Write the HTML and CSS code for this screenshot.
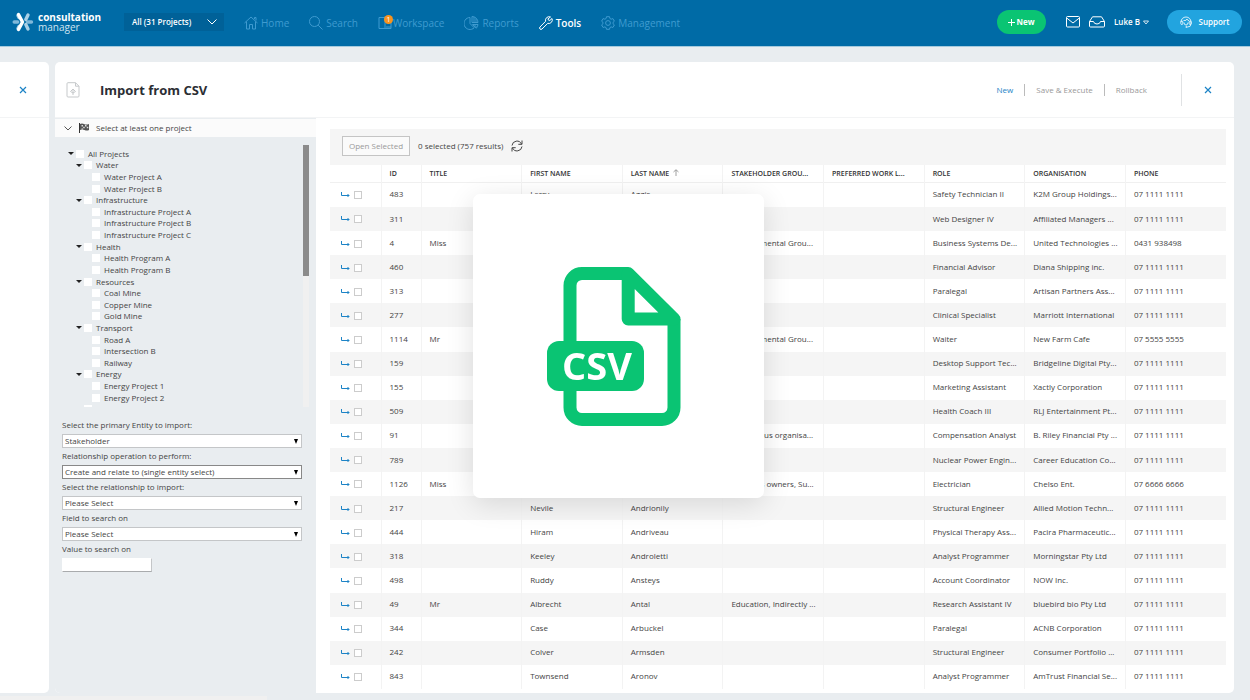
FILE: index.html
```html
<!DOCTYPE html>
<html lang="en">
<head>
<meta charset="utf-8">
<title>Import from CSV</title>
<link rel="stylesheet" href="styles.css">
</head>
<body>
<svg class="sprite" aria-hidden="true">
  <symbol id="go" viewBox="0 0 9 6"><path d="M.5 0v3.500H8M6.500 2l1.500 1.500L6.500 5" fill="none" stroke="currentColor"/></symbol>
  <symbol id="cross" viewBox="0 0 8 8"><path d="M1 1l6 6M7 1L1 7" fill="none" stroke="currentColor" stroke-width="1.2"/></symbol>
</svg>

<header class="topbar">
  <a class="logo" href="#">
    <svg width="22" height="20" viewBox="0 0 22 20" fill="none" stroke-linecap="round" stroke-width="3.4">
      <path d="M2.200 10h3.500M15.500 10h4" stroke="#7fb8da"/>
      <path d="M13.800 7.500l2.200-4.500M13.800 12.500l2.200 4.500M6 3.500l1 2M6 16.500l1-2" stroke="#a9d0e6"/>
      <path d="M6.500 2.500l4 7.500-4 7.500" stroke="#fff" stroke-linejoin="round"/>
    </svg>
    <span class="logo-text"><b>consultation</b><span>manager</span></span>
  </a>
  <button class="project-picker">All (31 Projects)
    <svg width="10" height="6" viewBox="0 0 10 6"><path d="M.5.5L5 5 9.500.5" fill="none" stroke="currentColor"/></svg>
  </button>
  <nav class="nav">
    <a href="#"><svg width="14" height="14" viewBox="0 0 14 14"><path d="M.5 7L7 1l6.500 6M2.500 5.500v7.500H5.500V8.500h3V13h3V5.500M10.500 3V1.500h1.500V4.500"/></svg>Home</a>
    <a href="#"><svg width="14" height="14" viewBox="0 0 14 14"><circle cx="5.500" cy="5.500" r="5"/><path d="M9.200 9.200l4.300 4.300"/></svg>Search</a>
    <a href="#" class="with-badge"><svg width="14" height="14" viewBox="0 0 14 14"><path d="M1 1.500h12v11H1zM7 1.500v11M8 11h5"/></svg><span class="badge">1</span>Workspace</a>
    <a href="#"><svg width="15" height="14" viewBox="0 0 15 14"><path d="M6 1.500a6 6 0 1 0 4.200 10.300L6 7.500zM8 .5v6h6A6 6 0 0 0 8 .5zM8.500 8.500h5.500a6 6 0 0 1-1.700 3.700zM10 1v5M12 2.500V6M10.500 9l2 2"/></svg>Reports</a>
    <a href="#" class="active"><svg width="14" height="14" viewBox="0 0 14 14"><path d="M11.500 1A3.600 3.600 0 0 0 6.600 5.300L1 11a1.400 1.400 0 0 0 2 2l5.700-5.600A3.600 3.600 0 0 0 13 2.500L10.800 4.500 9.300 4l-.3-1.200z"/></svg>Tools</a>
    <a href="#"><svg width="14" height="14" viewBox="0 0 14 14"><path d="M5.500.7h3l.4 1.800 1.200.7 1.800-.6 1.500 2.600-1.400 1.200v1.300l1.400 1.200-1.500 2.600-1.800-.6-1.200.7-.4 1.700h-3l-.4-1.700-1.200-.7-1.800.6L.6 8.900 2 7.700V6.400L.6 5.200l1.500-2.600 1.800.6 1.200-.7z"/><circle cx="7" cy="7" r="2.400"/></svg>Management</a>
  </nav>
  <div class="actions">
    <button class="pill new"><svg width="7" height="7" viewBox="0 0 7 7"><path d="M3.500 0v7M0 3.500h7" stroke="#fff"/></svg>New</button>
    <a class="icon" href="#" aria-label="Mail"><svg width="14" height="12" viewBox="0 0 14 12"><rect x=".5" y=".5" width="13" height="10.500" rx="1"/><path d="M.7 2L7 7l6.300-5"/></svg></a>
    <a class="icon" href="#" aria-label="Inbox"><svg width="16" height="12" viewBox="0 0 16 12"><path d="M.5 5.500L3.500.8h9l3 4.700V10a1 1 0 0 1-1 1h-13a1 1 0 0 1-1-1zM.5 5.500H4.500Q5 8 8 8t3.500-2.500h4"/></svg></a>
    <button class="user">Luke B <svg width="6" height="5" viewBox="0 0 6 5"><path d="M.5 1h5L3 4z" fill="none" stroke="currentColor" stroke-width=".8"/></svg></button>
    <button class="pill support"><svg width="12" height="12" viewBox="0 0 12 12" fill="none" stroke="#fff" stroke-width=".8"><path d="M1 6a5 5 0 0 1 10 0v2Q11 11 7.500 11M3.500 4.500Q6.500 5 7 3q.5 1.500 2 1.800"/><rect x=".8" y="5" width="2" height="3.500" rx="1"/><rect x="9.200" y="5" width="2" height="3.500" rx="1"/><path d="M4 6.500q0 2.500 2 2.500t2-2.500"/><circle cx="6.500" cy="11" r=".7"/></svg>Support</button>
  </div>
</header>

<main class="workspace">
  <aside class="rail">
    <div class="rail-head"><button class="close" aria-label="Close panel"><svg width="8" height="8"><use href="#cross"/></svg></button></div>
  </aside>

  <section class="panel">
    <div class="panel-head">
      <svg width="14" height="16" viewBox="0 0 14 16" fill="none" stroke="#c6c9cb"><path d="M2 .7h7.500l3.500 3.500V14a1 1 0 0 1-1 1H2a1 1 0 0 1-1-1V1.700a1 1 0 0 1 1-1zM9.500.7v3.500H13"/><path d="M7 13V7.500M4.500 9.500L7 7l2.500 2.500L7 11z"/></svg>
      <h1>Import from CSV</h1>
      <div class="commands">
        <button class="primary">New</button>
        <button>Save &amp; Execute</button>
        <button>Rollback</button>
      </div>
      <div class="close-box"><button class="close" aria-label="Close"><svg width="8" height="8"><use href="#cross"/></svg></button></div>
    </div>

    <div class="panel-body">
      <aside class="side">
        <div class="side-head">
          <svg width="8" height="5" viewBox="0 0 8 5"><path d="M.5.5L4 4 7.500.5" fill="none" stroke="#555"/></svg>
          <svg width="10" height="10" viewBox="0 0 10 10"><path d="M.5 0v10" stroke="#333"/><path d="M1 1q2-1 4 0t5 0v6q-2 1-4.500 0T1 7z" fill="#555"/><path d="M2.500 2h1.500v1.500H2.500zM6 2h1.500v1.500H6zM4.200 3.800h1.500v1.500H4.200zM7.800 3.800h1.500v1.500H7.800zM2.500 5.400h1.500v1H2.500z" fill="#ddd"/></svg>
          <span>Select at least one project</span>
        </div>
        <div class="tree-box">
          <ul class="tree">
            <li class="l0"><label><input type="checkbox">All Projects</label></li>
            <li class="l1"><label><input type="checkbox">Water</label></li>
            <li class="l2"><label><input type="checkbox">Water Project A</label></li>
            <li class="l2"><label><input type="checkbox">Water Project B</label></li>
            <li class="l1"><label><input type="checkbox">Infrastructure</label></li>
            <li class="l2"><label><input type="checkbox">Infrastructure Project A</label></li>
            <li class="l2"><label><input type="checkbox">Infrastructure Project B</label></li>
            <li class="l2"><label><input type="checkbox">Infrastructure Project C</label></li>
            <li class="l1"><label><input type="checkbox">Health</label></li>
            <li class="l2"><label><input type="checkbox">Health Program A</label></li>
            <li class="l2"><label><input type="checkbox">Health Program B</label></li>
            <li class="l1"><label><input type="checkbox">Resources</label></li>
            <li class="l2"><label><input type="checkbox">Coal Mine</label></li>
            <li class="l2"><label><input type="checkbox">Copper Mine</label></li>
            <li class="l2"><label><input type="checkbox">Gold Mine</label></li>
            <li class="l1"><label><input type="checkbox">Transport</label></li>
            <li class="l2"><label><input type="checkbox">Road A</label></li>
            <li class="l2"><label><input type="checkbox">Intersection B</label></li>
            <li class="l2"><label><input type="checkbox">Railway</label></li>
            <li class="l1"><label><input type="checkbox">Energy</label></li>
            <li class="l2"><label><input type="checkbox">Energy Project 1</label></li>
            <li class="l2"><label><input type="checkbox">Energy Project 2</label></li>
            <li class="l1 leaf"><label><input type="checkbox">Government Aff</label></li>
          </ul>
          <div class="track"><div class="thumb"></div></div>
        </div>
        <form class="form">
          <label for="entity">Select the primary Entity to import:</label>
          <div class="pick"><select id="entity"><option>Stakeholder</option></select></div>
          <label for="operation">Relationship operation to perform:</label>
          <div class="pick focus"><select id="operation"><option>Create and relate to (single entity select)</option></select></div>
          <label for="relationship">Select the relationship to import:</label>
          <div class="pick"><select id="relationship"><option>Please Select</option></select></div>
          <label for="field">Field to search on</label>
          <div class="pick"><select id="field"><option>Please Select</option></select></div>
          <label for="value">Value to search on</label>
          <input id="value" type="text">
        </form>
      </aside>

      <div class="results">
        <div class="toolbar">
          <button class="open">Open Selected</button>
          <span>0 selected (757 results)</span>
          <button class="refresh" aria-label="Refresh"><svg width="12" height="12" viewBox="0 0 12 12" fill="none" stroke="#444"><path d="M1 5.500A5 5 0 0 1 10.500 4M11 6.500A5 5 0 0 1 1.500 8M11 .5V4.300H7.300M1 11.500V7.700h3.700"/></svg></button>
        </div>
        <div class="grid-box">
        <table class="grid">
          <colgroup><col class="c-pick"><col class="c-id"><col span="8"></colgroup>
          <thead>
            <tr><th></th><th>ID</th><th>TITLE</th><th>FIRST NAME</th><th>LAST NAME <svg width="6" height="7" viewBox="0 0 6 7"><path d="M3 7V1M.5 3L3 .7 5.500 3" fill="none" stroke="#888" stroke-width=".8"/></svg></th><th>STAKEHOLDER GROU...</th><th>PREFERRED WORK L...</th><th>ROLE</th><th>ORGANISATION</th><th>PHONE</th></tr>
          </thead>
          <tbody>
            <tr><td><svg class="go"><use href="#go"/></svg><input type="checkbox" aria-label="Select 483"></td><td>483</td><td></td><td>Lerry</td><td>Aggis</td><td></td><td></td><td>Safety Technician II</td><td>K2M Group Holdings...</td><td>07 1111 1111</td></tr>
            <tr><td><svg class="go"><use href="#go"/></svg><input type="checkbox" aria-label="Select 311"></td><td>311</td><td></td><td></td><td></td><td></td><td></td><td>Web Designer IV</td><td>Affiliated Managers ...</td><td>07 1111 1111</td></tr>
            <tr><td><svg class="go"><use href="#go"/></svg><input type="checkbox" aria-label="Select 4"></td><td>4</td><td>Miss</td><td></td><td></td><td>Environmental Grou...</td><td></td><td>Business Systems De...</td><td>United Technologies ...</td><td>0431 938498</td></tr>
            <tr><td><svg class="go"><use href="#go"/></svg><input type="checkbox" aria-label="Select 460"></td><td>460</td><td></td><td></td><td></td><td></td><td></td><td>Financial Advisor</td><td>Diana Shipping inc.</td><td>07 1111 1111</td></tr>
            <tr><td><svg class="go"><use href="#go"/></svg><input type="checkbox" aria-label="Select 313"></td><td>313</td><td></td><td></td><td></td><td></td><td></td><td>Paralegal</td><td>Artisan Partners Ass...</td><td>07 1111 1111</td></tr>
            <tr><td><svg class="go"><use href="#go"/></svg><input type="checkbox" aria-label="Select 277"></td><td>277</td><td></td><td></td><td></td><td></td><td></td><td>Clinical Specialist</td><td>Marriott International</td><td>07 1111 1111</td></tr>
            <tr><td><svg class="go"><use href="#go"/></svg><input type="checkbox" aria-label="Select 1114"></td><td>1114</td><td>Mr</td><td></td><td></td><td>Environmental Grou...</td><td></td><td>Waiter</td><td>New Farm Cafe</td><td>07 5555 5555</td></tr>
            <tr><td><svg class="go"><use href="#go"/></svg><input type="checkbox" aria-label="Select 159"></td><td>159</td><td></td><td></td><td></td><td></td><td></td><td>Desktop Support Tec...</td><td>Bridgeline Digital Pty...</td><td>07 1111 1111</td></tr>
            <tr><td><svg class="go"><use href="#go"/></svg><input type="checkbox" aria-label="Select 155"></td><td>155</td><td></td><td></td><td></td><td></td><td></td><td>Marketing Assistant</td><td>Xactly Corporation</td><td>07 1111 1111</td></tr>
            <tr><td><svg class="go"><use href="#go"/></svg><input type="checkbox" aria-label="Select 509"></td><td>509</td><td></td><td></td><td></td><td></td><td></td><td>Health Coach III</td><td>RLJ Entertainment Pt...</td><td>07 1111 1111</td></tr>
            <tr><td><svg class="go"><use href="#go"/></svg><input type="checkbox" aria-label="Select 91"></td><td>91</td><td></td><td></td><td></td><td>Indigenous organisa...</td><td></td><td>Compensation Analyst</td><td>B. Riley Financial Pty ...</td><td>07 1111 1111</td></tr>
            <tr><td><svg class="go"><use href="#go"/></svg><input type="checkbox" aria-label="Select 789"></td><td>789</td><td></td><td></td><td></td><td></td><td></td><td>Nuclear Power Engin...</td><td>Career Education Co...</td><td>07 1111 1111</td></tr>
            <tr><td><svg class="go"><use href="#go"/></svg><input type="checkbox" aria-label="Select 1126"></td><td>1126</td><td>Miss</td><td></td><td></td><td>Business owners, Su...</td><td></td><td>Electrician</td><td>Chelso Ent.</td><td>07 6666 6666</td></tr>
            <tr><td><svg class="go"><use href="#go"/></svg><input type="checkbox" aria-label="Select 217"></td><td>217</td><td></td><td>Nevile</td><td>Andrionily</td><td></td><td></td><td>Structural Engineer</td><td>Allied Motion Techn...</td><td>07 1111 1111</td></tr>
            <tr><td><svg class="go"><use href="#go"/></svg><input type="checkbox" aria-label="Select 444"></td><td>444</td><td></td><td>Hiram</td><td>Andriveau</td><td></td><td></td><td>Physical Therapy Ass...</td><td>Pacira Pharmaceutic...</td><td>07 1111 1111</td></tr>
            <tr><td><svg class="go"><use href="#go"/></svg><input type="checkbox" aria-label="Select 318"></td><td>318</td><td></td><td>Keeley</td><td>Androletti</td><td></td><td></td><td>Analyst Programmer</td><td>Morningstar Pty Ltd</td><td>07 1111 1111</td></tr>
            <tr><td><svg class="go"><use href="#go"/></svg><input type="checkbox" aria-label="Select 498"></td><td>498</td><td></td><td>Ruddy</td><td>Ansteys</td><td></td><td></td><td>Account Coordinator</td><td>NOW Inc.</td><td>07 1111 1111</td></tr>
            <tr><td><svg class="go"><use href="#go"/></svg><input type="checkbox" aria-label="Select 49"></td><td>49</td><td>Mr</td><td>Albrecht</td><td>Antal</td><td>Education, Indirectly ...</td><td></td><td>Research Assistant IV</td><td>bluebird bio Pty Ltd</td><td>07 1111 1111</td></tr>
            <tr><td><svg class="go"><use href="#go"/></svg><input type="checkbox" aria-label="Select 344"></td><td>344</td><td></td><td>Case</td><td>Arbuckel</td><td></td><td></td><td>Paralegal</td><td>ACNB Corporation</td><td>07 1111 1111</td></tr>
            <tr><td><svg class="go"><use href="#go"/></svg><input type="checkbox" aria-label="Select 242"></td><td>242</td><td></td><td>Colver</td><td>Armsden</td><td></td><td></td><td>Structural Engineer</td><td>Consumer Portfolio ...</td><td>07 1111 1111</td></tr>
            <tr><td><svg class="go"><use href="#go"/></svg><input type="checkbox" aria-label="Select 843"></td><td>843</td><td></td><td>Townsend</td><td>Aronov</td><td></td><td></td><td>Analyst Programmer</td><td>AmTrust Financial Se...</td><td>07 1111 1111</td></tr>
          </tbody>
        </table>
        </div>
      </div>
    </div>
  </section>
</main>
<div class="status-strip"></div>

<div class="overlay">
  <div class="card">
    <svg width="134" height="160" viewBox="0 0 134 160" role="img" aria-label="CSV file">
      <g fill="none" stroke="#0ac473" stroke-width="13" stroke-linejoin="round">
        <path d="M81.200 7.500H35a12 12 0 0 0-12 12v122a12 12 0 0 0 12 12h80a12 12 0 0 0 12-12V53"/>
        <path d="M81.200 7.500L127 53H81.200z"/>
      </g>
      <rect y="75" width="97" height="50" rx="12" fill="#0ac473"/>
      <text x="50" y="114" text-anchor="middle" class="csv">CSV</text>
    </svg>
  </div>
</div>
</body>
</html>
```
FILE: styles.css
```css
* { box-sizing: border-box; }

body {
  margin: 0;
  height: 100vh;
  display: flex;
  flex-direction: column;
  background: #e9edf0;
  color: #444;
  font: 8px/12px "Open Sans", "Noto Sans", sans-serif;
  overflow: hidden;
}

button, input, select { font: inherit; color: inherit; }
button { border: 0; background: none; padding: 0; cursor: pointer; }
a { color: inherit; text-decoration: none; }
svg { display: block; flex: none; }
.sprite { position: absolute; width: 0; height: 0; }

/* Top bar */
.topbar {
  display: flex;
  align-items: center;
  flex: none;
  height: 47px;
  padding: 0 8px 2px 12px;
  background: #006ba6;
  border-bottom: 1px solid #a5cadd;
  color: #fff;
}
.logo { display: flex; align-items: center; gap: 4px; width: 112px; }
.logo-text { display: flex; flex-direction: column; font-size: 10px; line-height: 10px; color: #cfe4f0; }
.logo-text b { color: #fff; }
.project-picker {
  display: flex;
  align-items: center;
  justify-content: space-between;
  width: 100px;
  height: 18px;
  padding: 0 7px 0 8px;
  background: #006198;
  font-weight: 600;
}
.nav { display: flex; gap: 20px; margin-left: 20px; padding-top: 1px; font-size: 10px; line-height: 16px; color: #3f9bd0; }
.nav a { display: flex; align-items: center; gap: 3px; }
.nav svg { fill: none; stroke: currentColor; }
.nav .active { color: #fff; font-weight: 600; }
.nav .with-badge { position: relative; gap: 1px; }
.badge {
  position: absolute;
  left: 6px;
  top: 0;
  width: 9px;
  height: 9px;
  border-radius: 5px;
  background: #f7931e;
  color: #fff;
  font-size: 7px;
  line-height: 9px;
  text-align: center;
}
.actions { display: flex; align-items: center; margin-left: auto; }
.pill {
  display: flex;
  align-items: center;
  justify-content: center;
  height: 24px;
  border-radius: 12px;
  font-weight: 700;
  color: #fff;
}
.new { gap: 1px; width: 49px; margin-right: 20px; background: #0ac473; }
.support { gap: 7px; width: 75px; background: #22a4df; font-weight: 600; }
.icon { margin-right: 9px; }
.icon svg { fill: none; stroke: #fff; }
.user { display: flex; align-items: center; gap: 3px; margin-right: 18px; font-weight: 600; }

/* Panels */
.workspace { display: flex; flex: 1; gap: 6px; min-height: 0; padding: 15px 16px 3px 0; }
.rail { flex: none; width: 49px; background: #fff; border-radius: 0 5px 5px 0; }
.rail-head {
  display: flex;
  align-items: center;
  justify-content: center;
  height: 56px;
  padding-right: 3px;
  border-bottom: 1px solid #f3f4f5;
}
.close { color: #1c83c6; }
.panel { display: flex; flex-direction: column; flex: 1; min-width: 0; background: #fff; border-radius: 5px; overflow: hidden; }
.panel-head {
  display: flex;
  align-items: center;
  flex: none;
  height: 56px;
  padding-left: 11px;
  border-bottom: 1px solid #f3f4f5;
}
h1 { margin: 0 0 0 20px; font-size: 13px; line-height: 18px; font-weight: 700; color: #2b2e33; }
.commands { display: flex; margin-left: auto; color: #999; }
.commands button { padding: 0 11px; border-left: 1px solid #bbb; }
.commands .primary { border: 0; color: #1c83c6; }
.close-box {
  display: flex;
  align-items: center;
  justify-content: center;
  width: 53px;
  height: 32px;
  margin-left: 23px;
  border-left: 1px solid #e0e2e4;
}
.panel-body { display: flex; flex: 1; min-height: 0; }

/* Sidebar */
.side { flex: none; width: 261px; background: #e9edf0; padding-top: 1px; }
.side-head { display: flex; align-items: center; gap: 7px; height: 18px; padding-left: 9px; background: #fbfbfb; }
.tree-box { display: flex; justify-content: space-between; height: 262px; margin: 8px 7px 0 0; overflow: hidden; }
.tree { display: grid; grid-auto-rows: 1fr; flex: none; height: 267px; margin: 3px 0 0; padding: 0; list-style: none; }
.tree li { display: flex; align-items: center; min-height: 0; }
.tree label { display: flex; align-items: center; gap: 4px; }
.tree input { appearance: none; width: 8px; height: 8px; margin: 0; background: #fff; }
.l0, .l1 { gap: 2px; }
.l0 { padding-left: 13px; }
.l1 { padding-left: 21px; }
.l2 { padding-left: 37px; }
.l0::before, .l1::before { content: ""; border: 3px solid transparent; border-top-color: #222; border-bottom: 0; }
.leaf::before { border-top-color: transparent; }
.track { width: 6px; background: #f0f0f0; }
.thumb { height: 50%; background: #8b8b8b; }

.form { display: flex; flex-direction: column; padding: 10px 14px 0 7px; }
.form label { padding-bottom: 1px; line-height: 16px; }
.pick { position: relative; }
.pick::after {
  content: "";
  position: absolute;
  right: 4px;
  top: 5px;
  border: 2px solid transparent;
  border-top: 5px solid #000;
  border-bottom: 0;
  pointer-events: none;
}
.pick select, .form input {
  display: block;
  appearance: none;
  height: 14px;
  padding: 0 2px;
  border: 1px solid #c4c6c8;
  border-radius: 0;
  background: #fff;
  line-height: 12px;
}
.pick select { width: 100%; }
.pick.focus select { border-color: #888; }
.form input { width: 90px; border-color: #fff #c4c6c8 #a9abad #fff; }

/* Results */
.results { display: flex; flex-direction: column; flex: 1; min-width: 0; padding: 11px 8px 4px 14px; }
.toolbar { display: flex; align-items: center; gap: 8px; flex: none; height: 36px; padding: 0 12px 3px; background: #f5f5f5; }
.open { width: 68px; height: 20px; border: 1px solid #c4c4c4; color: #999; background: #fafafa; }
.grid-box { flex: 1; min-height: 0; }
.grid { width: 100%; height: 100%; table-layout: fixed; border-collapse: collapse; }
.c-pick { width: 51px; }
.c-id { width: 40px; }
.grid th, .grid td { padding: 0 0 0 8px; border-left: 1px solid #f3f3f3; text-align: left; white-space: nowrap; overflow: hidden; }
.grid td { padding-bottom: 1px; }
.grid th:first-child, .grid td:first-child { border-left: 0; padding-left: 11px; }
.grid thead tr { height: 17px; border-bottom: 1px solid #f0f0f0; }
.grid th { padding-top: 1px; font-size: 7px; line-height: 12px; font-weight: 600; color: #333; }
.grid th svg { display: inline-block; margin-left: 2px; }
.grid tbody tr:nth-child(even) { background: #f5f5f5; }
.go { display: inline-block; width: 9px; height: 6px; margin-right: 4px; vertical-align: middle; color: #1c83c6; }
.grid input { appearance: none; width: 8px; height: 8px; margin: 0; border: 1px solid #ccc; background: #fff; vertical-align: middle; }

.status-strip { flex: none; width: 267px; height: 4px; background: #f0f0f0; }

/* Import card */
.overlay { position: fixed; inset: 0 13px 8px 0; display: grid; place-items: center; pointer-events: none; }
.card {
  display: grid;
  place-items: center;
  width: 291px;
  height: 304px;
  padding-right: 10px;
  border-radius: 7px;
  background: #fff;
  box-shadow: 0 6px 28px rgba(0, 0, 0, .12);
}
.csv { fill: #fff; font: 700 38px "Open Sans", "Noto Sans", sans-serif; }
```
